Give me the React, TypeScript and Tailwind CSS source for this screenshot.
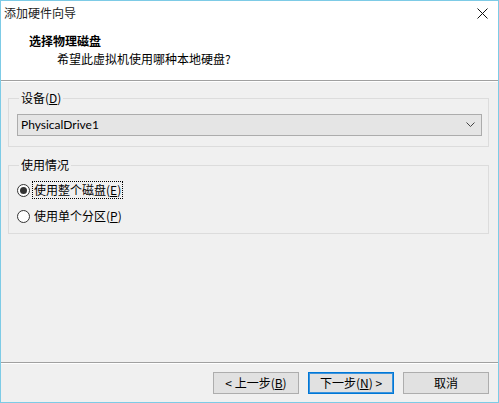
import React from 'react';

const font = { fontFamily: '"Noto Sans CJK SC", "Noto Sans", sans-serif' };

function Radio({ checked, label, mnemonic, focused }: { checked?: boolean; label: string; mnemonic: string; focused?: boolean }) {
  return (
    <div className="flex items-center h-[20px]">
      <span className="w-[13px] h-[13px] rounded-full border border-[#333] bg-white flex items-center justify-center">
        {checked && <span className="w-[7px] h-[7px] rounded-full bg-[#333]" />}
      </span>
      <span
        className={
          'ml-[2px] px-[1px] text-[12px] leading-[16px] text-black ' +
          (focused ? 'border border-dotted border-black' : 'border border-transparent')
        }
      >
        {label}(<span className="underline">{mnemonic}</span>)
      </span>
    </div>
  );
}

function Button({ children, primary }: { children: React.ReactNode; primary?: boolean }) {
  return (
    <button
      className={
        'w-[86px] h-[22px] bg-[#e1e1e1] text-[12px] leading-[16px] text-black flex items-center justify-center border ' +
        (primary ? 'border-[#0078d7] shadow-[inset_0_0_0_1px_#3c93dc]' : 'border-[#adadad]')
      }
    >
      {children}
    </button>
  );
}

export default function App() {
  return (
    <div style={font} className="w-[499px] h-[403px] border border-[#7dcbe6] bg-[#f0f0f0] flex flex-col text-black">
      {/* title + header */}
      <div className="h-[79px] bg-white flex flex-col">
        <div className="h-[23px] flex items-center justify-between pl-[3px] pr-[10px]">
          <span className="text-[12px] leading-[16px] text-[#222]">添加硬件向导</span>
          <svg width="11" height="11" viewBox="0 0 11 11" className="mt-[1px]">
            <path d="M0.5 0.5 L10.5 10.5 M10.5 0.5 L0.5 10.5" stroke="#111" strokeWidth="1" fill="none" />
          </svg>
        </div>
        <div className="mt-[9px] pl-[28px] text-[12px] leading-[16px] font-bold">选择物理磁盘</div>
        <div className="mt-[2px] pl-[56px] text-[12px] leading-[16px]">希望此虚拟机使用哪种本地硬盘?</div>
      </div>
      <div className="h-[1px] bg-[#a0a0a0]" />
      <div className="h-[1px] bg-white" />

      {/* device group */}
      <fieldset className="mt-[8px] ml-[7px] mr-[9px] border border-[#dcdcdc] pl-[8px] pr-[6px] pb-[10px]">
        <legend className="ml-[2px] px-[2px] text-[12px] leading-[16px]">
          设备(<span className="underline">D</span>)
        </legend>
        <div className="mt-[8px] h-[22px] bg-[#e5e5e5] border border-[#acacac] flex items-center justify-between pl-[3px] pr-[6px]">
          <span className="text-[12px] leading-[16px]" style={{ fontFamily: 'Lato, "Liberation Sans", sans-serif' }}>
            PhysicalDrive1
          </span>
          <svg width="9" height="6" viewBox="0 0 9 6">
            <path d="M0.5 0.5 L4.5 4.5 L8.5 0.5" stroke="#444" strokeWidth="1" fill="none" />
          </svg>
        </div>
      </fieldset>

      {/* usage group */}
      <fieldset className="mt-[10px] ml-[7px] mr-[9px] border border-[#dcdcdc] pl-[8px] pb-[7px]">
        <legend className="ml-[2px] px-[2px] text-[12px] leading-[16px]">使用情况</legend>
        <div className="mt-[7px] flex flex-col gap-[6px]">
          <Radio checked focused label="使用整个磁盘" mnemonic="E" />
          <Radio label="使用单个分区" mnemonic="P" />
        </div>
      </fieldset>

      <div className="flex-1" />

      {/* footer */}
      <div className="h-[1px] bg-[#a0a0a0]" />
      <div className="h-[1px] bg-white" />
      <div className="mt-[8px] mb-[8px] flex justify-end gap-[9px] pr-[9px]">
        <Button>
          &lt; 上一步(<span className="underline">B</span>)
        </Button>
        <Button primary>
          下一步(<span className="underline">N</span>) &gt;
        </Button>
        <Button>取消</Button>
      </div>
    </div>
  );
}
